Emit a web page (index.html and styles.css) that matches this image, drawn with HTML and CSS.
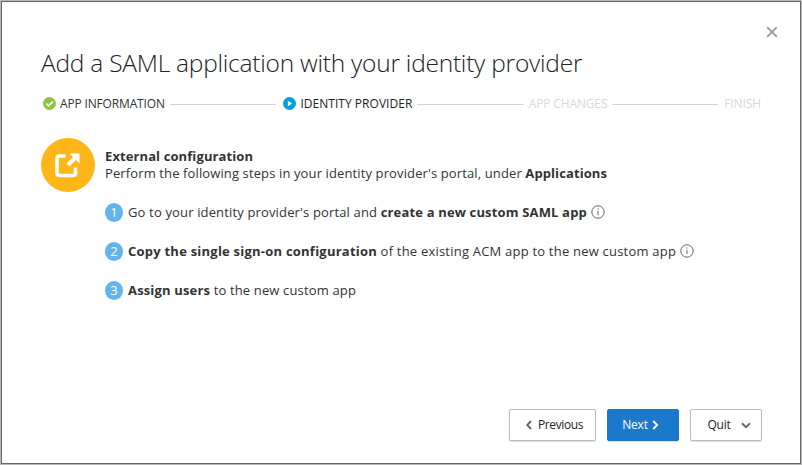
FILE: index.html
```html
<!DOCTYPE html>
<html lang="en">
<head>
<meta charset="utf-8">
<title>Add a SAML application</title>
<link rel="stylesheet" href="styles.css">
</head>
<body>
<main class="dialog">
  <button class="close" aria-label="Close"><svg width="12" height="12" viewBox="0 0 12 12"><path d="M1.2 1.2 10.8 10.8M10.8 1.2 1.2 10.8"/></svg></button>
  <h1 class="title"><span>Add a SAML application with your identity provider</span></h1>
  <nav class="steps">
    <div class="step done">
      <svg class="step-icon" width="13" height="13" viewBox="0 0 13 13"><circle cx="6.5" cy="6.5" r="6.5" fill="#8cc63f"/><path d="M3.3 6.6 5.6 8.8 9.8 4.6" fill="none" stroke="#fff" stroke-width="1.6"/></svg>
      <span class="label-info">APP INFORMATION</span>
    </div>
    <i class="line"></i>
    <div class="step current">
      <svg class="step-icon" width="13" height="13" viewBox="0 0 13 13"><circle cx="6.5" cy="6.5" r="6.5" fill="#07a0d8"/><path d="M4.9 3.8v5.4L9.1 6.5z" fill="#fff"/></svg>
      <span class="label-idp">IDENTITY PROVIDER</span>
    </div>
    <i class="line"></i>
    <div class="step"><span class="label-changes">APP CHANGES</span></div>
    <i class="line"></i>
    <div class="step"><span class="label-finish">FINISH</span></div>
  </nav>
  <section class="content">
    <svg class="badge" width="54" height="54" viewBox="0 0 54 54"><circle cx="27" cy="27" r="27" fill="#ffb619"/><path d="M24.500 18H18.500Q16 18 16 20.500V35Q16 37.500 18.500 37.500H32Q34.500 37.500 34.500 35V29.500" fill="none" stroke="#fff" stroke-width="3.600"/><path d="M27 27 35 19" stroke="#fff" stroke-width="4"/><path d="M28.500 15.500H38.500V25.500z" fill="#fff"/></svg>
    <div class="body">
      <p class="heading"><b>External configuration</b></p>
      <p class="intro"><span>Perform the following steps in your identity provider's portal, under </span><b>Applications</b></p>
      <ol class="tasks">
        <li><i class="num">1</i><span class="task-text"><span>Go to your identity provider's portal and </span><b>create a new custom SAML app</b></span><svg class="info" width="14" height="14" viewBox="0 0 14 14"><circle cx="7" cy="7" r="6.200"/><path d="M7 5.800v4.400M7 3.400v1.200"/></svg></li>
        <li><i class="num">2</i><span class="task-text copy"><b>Copy the single sign-on configuration</b><span> of the existing ACM app to the new custom app</span></span><svg class="info" width="14" height="14" viewBox="0 0 14 14"><circle cx="7" cy="7" r="6.200"/><path d="M7 5.800v4.400M7 3.400v1.200"/></svg></li>
        <li><i class="num">3</i><span class="task-text"><b>Assign users</b><span> to the new custom app</span></span></li>
      </ol>
    </div>
  </section>
  <footer class="actions">
    <button class="btn previous"><svg width="6" height="10" viewBox="0 0 6 10"><path d="M5 1 1.200 5 5 9"/></svg><span>Previous</span></button>
    <button class="btn next"><span>Next</span><svg width="7" height="10" viewBox="0 0 7 10"><path d="M1.200 1 5.200 5 1.200 9"/></svg></button>
    <button class="btn quit"><span>Quit</span><svg width="10" height="7" viewBox="0 0 10 7"><path d="M1 1.300 5 5.200 9 1.300"/></svg></button>
  </footer>
</main>
</body>
</html>
```
FILE: styles.css
```css
* { box-sizing: border-box; }
body { margin: 0; background: #b8b8b8; font-family: "Open Sans", "Noto Sans", sans-serif; color: #333; overflow: hidden; }
.dialog { position: relative; width: 800px; height: 463px; margin: 1px; padding: 44px 39px 0; border: 1px solid #666; background: #fff; display: flex; flex-direction: column; }
.close { position: absolute; top: 24px; right: 22px; width: 12px; height: 12px; padding: 0; border: 0; background: none; }
.close svg { display: block; stroke: #999; stroke-width: 1.7; }
.title { margin: 0; height: 34px; line-height: 34px; font-size: 24.5px; font-weight: 300; color: #222; white-space: nowrap; letter-spacing: -.24px; }
.steps { display: flex; align-items: center; height: 16px; margin: 16px 0 0 2px; font-size: 12px; line-height: 16px; white-space: nowrap; color: #d8d8d8; }
.step { display: flex; align-items: center; flex: none; }
.done { width: 122px; color: #333; }
.current { width: 129px; margin-left: 2px; color: #222; }
.step-icon { margin: -1px 4px 0 0; flex: none; }
.label-info { letter-spacing: -.16px; }
.label-idp { letter-spacing: .03px; }
.label-changes { display: block; width: 78px; letter-spacing: -.15px; }
.label-finish { margin-left: 1px; letter-spacing: -.1px; }
.line { height: 1px; width: 107px; margin: 0 5px; background: #d3d3d3; }
.content { display: flex; margin-top: 26px; gap: 10px; }
.badge { flex: none; }
.body { padding-top: 10px; font-size: 13px; line-height: 17px; white-space: nowrap; letter-spacing: .12px; }
.body p { margin: 0; height: 17px; white-space: pre; }
.body b { font-weight: 700; letter-spacing: .1px; }
.tasks { list-style: none; margin: 21px 0 0; padding: 0; display: grid; gap: 20px; }
.tasks li { display: flex; align-items: center; height: 19px; }
.task-text { white-space: pre; letter-spacing: .15px; }
.body .task-text b { letter-spacing: .16px; }
.copy { letter-spacing: .21px; }
.body .copy b { letter-spacing: .23px; }
.num { width: 18px; height: 19px; border-radius: 50%; background: #61b4ee; color: #fff; text-align: center; font-style: normal; line-height: 19px; margin-right: 5px; }
.info { margin: -2px 0 0 4px; fill: none; stroke: #666; stroke-width: 1; }
.actions { display: flex; position: absolute; right: 38px; bottom: 22px; gap: 11px; }
.btn { height: 32px; border: 1px solid #bbb; border-radius: 2px; background: #fff; color: #222; font: 12px/30px "Open Sans", sans-serif; padding: 0; display: flex; align-items: center; justify-content: center; letter-spacing: -.2px; box-shadow: 0 1px 1px #ddd; }
.btn svg { fill: none; stroke: #666; stroke-width: 1.9; }
.previous { width: 87px; gap: 6px; padding-left: 4px; letter-spacing: -.4px; }
.next { width: 72px; gap: 4px; padding-right: 5px; background: #1b79cb; border-color: #1b79cb; color: #fff; }
.next svg { stroke: #fff; }
.quit { width: 72px; gap: 10px; padding-left: 6px; }
```
